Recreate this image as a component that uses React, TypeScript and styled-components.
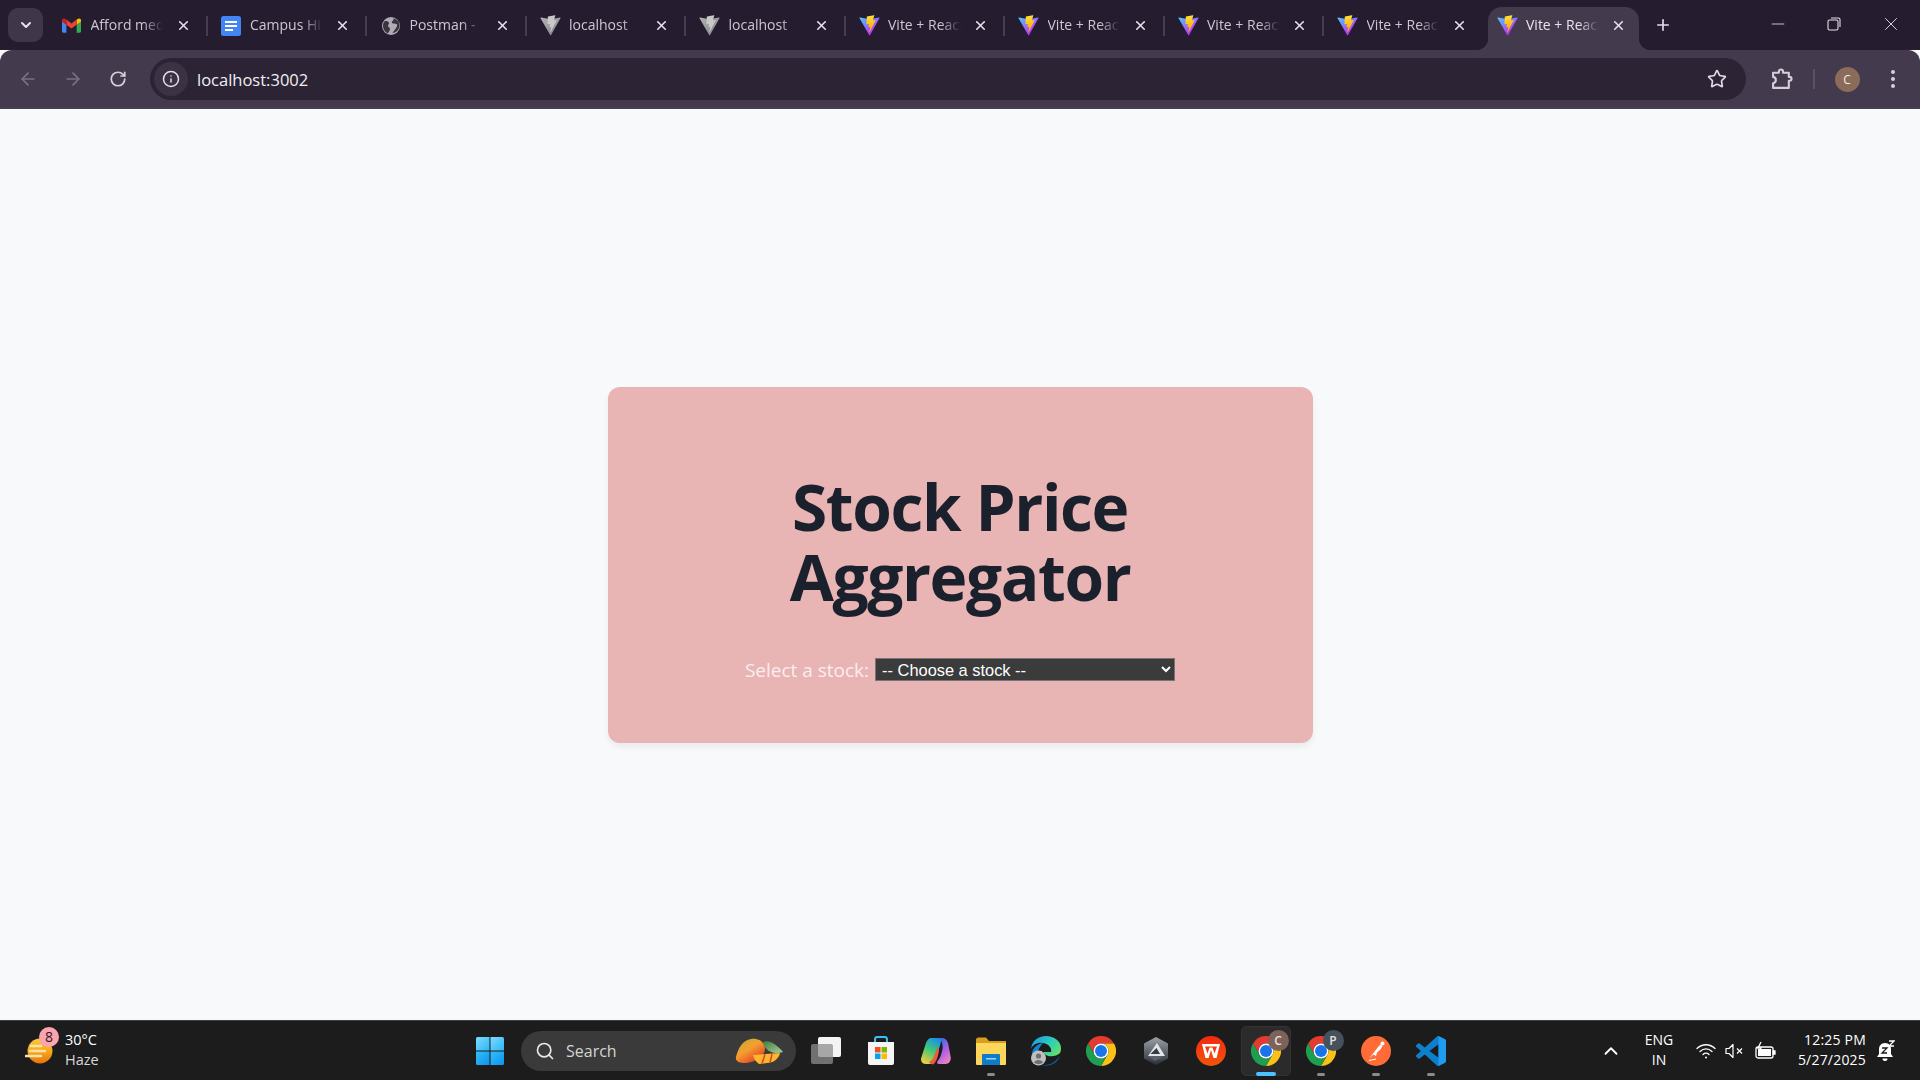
import React from "react";
import styled, { createGlobalStyle } from "styled-components";
import { ArrowLeft, ArrowRight, RotateCw, Info, Star, ChevronDown, ChevronUp, Plus, X, Minus, Search as SearchIcon } from "lucide-react";

const Global = createGlobalStyle`
  html, body { margin: 0; padding: 0; height: 100%; overflow: hidden; }
  #root { height: 100%; }
`;

const uiFont = `"Open Sans", "Noto Sans", sans-serif`;

const Screen = styled.div`
  width: 1920px; height: 1080px; display: flex; flex-direction: column;
  font-family: ${uiFont}; background: #f7f9fa;
`;

/* ---------- tab strip ---------- */
const TabStrip = styled.div`
  height: 50px; flex: none; background: #251d2f; display: flex; align-items: flex-end; padding-left: 8px;
`;
const TabSearch = styled.div`
  width: 35px; height: 34px; margin: 0 3px 8px 0; border-radius: 10px; background: #3f3749; color: #e6e0ea;
  display: flex; align-items: center; justify-content: center; flex: none;
`;
const Tab = styled.div`
  width: 159.5px; height: 43px; flex: none; position: relative; padding-left: 6.5px; box-sizing: border-box;
  &::after {
    content: ""; position: absolute; right: -2px; top: 9px; width: 2px; height: 20px;
    background: ${p => (p.$hideLine ? "transparent" : "#463e50")};
  }
`;
const TabBody = styled.div`
  width: 150.5px; height: 43px; box-sizing: border-box; padding: 0 10px 6px 8px; display: flex; align-items: center; position: relative;
  border-radius: 14px 14px 0 0; background: ${p => (p.$active ? "#433a4d" : "transparent")};
  color: ${p => (p.$active ? "#e9e4ec" : "#cdc7d2")};
  ${p => p.$active && `
    &::before, &::after { content: ""; position: absolute; bottom: 0; width: 12px; height: 12px; }
    &::before { left: -12px; background: radial-gradient(circle at 0 0, #251d2f 12px, #433a4d 12.5px); }
    &::after { right: -12px; background: radial-gradient(circle at 100% 0, #251d2f 12px, #433a4d 12.5px); }
  `}
`;
const Favicon = styled.span`
  width: 22px; height: 22px; flex: none; display: flex; align-items: center; justify-content: center;
`;
const TabTitle = styled.span`
  flex: 1; min-width: 0; margin: -2px 0 0 8px; font-size: 14px; white-space: nowrap; overflow: hidden;
  -webkit-mask-image: linear-gradient(90deg, #000 72%, transparent 100%);
  mask-image: linear-gradient(90deg, #000 72%, transparent 100%);
`;
const TabClose = styled.span`
  width: 20px; height: 20px; flex: none; margin-left: 10px; display: flex; align-items: center; justify-content: center; color: #e6e0ea;
`;
const NewTab = styled.div`
  width: 24px; height: 24px; margin: 0 0 13px 10px; color: #e3dde7; display: flex; align-items: center; justify-content: center; flex: none;
`;
const WindowControls = styled.div`
  margin-left: auto; display: flex; height: 50px; align-items: center; padding-right: 1px; padding-bottom: 2px; box-sizing: border-box; color: #e6e0ea;
`;
const WinButton = styled.div`
  width: 56.5px; height: 24px; display: flex; align-items: center; justify-content: center;
`;

/* ---------- toolbar ---------- */
const Toolbar = styled.div`
  height: 59px; flex: none; box-sizing: border-box; background: #433a4d; border-radius: 12px 12px 0 0;
  border-bottom: 2px solid #483f52; display: flex; align-items: center; padding: 1px 12px 0 11px; color: #d6d0da;
`;
const NavButton = styled.div`
  width: 34px; height: 34px; margin-right: 11px; display: flex; align-items: center; justify-content: center; flex: none;
  color: ${p => (p.$dim ? "#7a7283" : "#d6d0da")};
`;
const Omnibox = styled.div`
  width: 1596px; height: 42px; margin-left: 4px; flex: none; border-radius: 21px; background: #2c2434; display: flex; align-items: center; padding: 0 19px 0 4px; box-sizing: border-box;
`;
const InfoChip = styled.div`
  width: 34px; height: 34px; border-radius: 50%; background: #3b3344; color: #e6e0ea; display: flex; align-items: center; justify-content: center; flex: none;
`;
const Url = styled.span`
  margin-left: 9px; font-size: 16.5px; color: #f1eef3; flex: 1;
`;
const ToolIcon = styled.div`
  width: 28px; height: 28px; display: flex; align-items: center; justify-content: center; flex: none; margin-left: ${p => p.$ml || 0}px;
`;
const ToolDivider = styled.div`
  width: 2px; height: 20px; background: #5a5164; margin-left: 17px; flex: none;
`;
const Avatar = styled.div`
  width: 25px; height: 25px; border-radius: 50%; background: #8b6b5a; color: #f4ece8; font-size: 12px; display: flex; align-items: center; justify-content: center; margin-left: 19.5px; flex: none;
`;
const Dots = styled.div`
  display: flex; flex-direction: column; gap: 3px; margin-left: 31.5px; flex: none;
  span { width: 4px; height: 4px; border-radius: 50%; background: #d6d0da; display: block; }
`;

/* ---------- page ---------- */
const Page = styled.main`
  flex: 1; display: flex; align-items: center; justify-content: center; background: #f7f9fa;
`;
const Card = styled.section`
  width: 705px; height: 356px; box-sizing: border-box; border-radius: 12px; background: #e8b4b4; box-shadow: 0 4px 6px rgba(0,0,0,0.06);
  display: flex; flex-direction: column; align-items: center; padding-top: 85.5px;
`;
const Title = styled.h1`
  margin: 0; width: 400px; text-align: center; font-size: 64px; line-height: 70px; font-weight: 700; color: #1a202c;
  font-family: "Open Sans", sans-serif; letter-spacing: -1.4px;
`;
const FormRow = styled.div`
  display: flex; align-items: center; margin-top: 45.5px; gap: 6px;
`;
const Label = styled.label`
  font-size: 19px; color: #fbeeee; line-height: 24px;
`;
const Select = styled.select`
  width: 300px; height: 23px; box-sizing: border-box; color-scheme: dark; font-family: "Liberation Sans", Arial, sans-serif; font-size: 16.4px;
  background: #3b3b3b; color: #fff; border: 1px solid #767676; border-radius: 0; padding: 0 0 0 2px;
`;

/* ---------- taskbar ---------- */
const Taskbar = styled.footer`
  height: 60px; flex: none; box-sizing: border-box; background: #1c1c1c; border-top: 1px solid #3d3d3d; display: flex; align-items: center; color: #fff;
`;
const Weather = styled.div`
  width: 475px; flex: none; display: flex; align-items: center; padding-left: 25px; box-sizing: border-box; position: relative;
`;
const WeatherBadge = styled.span`
  position: absolute; left: 39px; top: -3px; width: 20px; height: 20px; border-radius: 50%; background: #fba3b1; color: #2a1a1c; font-size: 14px; display: flex; align-items: center; justify-content: center; line-height: 1;
`;
const WeatherText = styled.div`
  margin-left: 12px; padding-bottom: 2px; font-size: 14.5px; line-height: 20px; display: flex; flex-direction: column;
  span:last-child { color: #d8d8d8; }
`;
const StartButton = styled.div`
  width: 30px; height: 30px; flex: none; margin-right: 16px;
`;
const SearchPill = styled.div`
  width: 275px; height: 40px; flex: none; box-sizing: border-box; border-radius: 20px; background: #3a3a3a; display: flex; align-items: center; padding: 0 13px 0 14px; color: #e8e8e8;
`;
const SearchLabel = styled.span`
  font-size: 16px; margin-left: 11px; flex: 1; color: #d4d4d4;
`;
const AppRow = styled.div`
  display: flex; margin-left: 2.5px; align-items: center; height: 60px;
`;
const AppSlot = styled.div`
  width: 55px; height: 50px; display: flex; align-items: center; justify-content: center; position: relative; flex: none;
  ${p => p.$active && `
    &::before { content: ""; position: absolute; left: 2.5px; top: 0; width: 50px; height: 50px; border-radius: 5px; background: #2b2b2b; border: 1px solid #333; box-sizing: border-box; }
  `}
  svg { position: relative; }
  &::after {
    content: ""; position: absolute; bottom: 0; left: 50%; transform: translateX(-50%); border-radius: 2px; 
    display: ${p => (p.$dot || p.$active ? "block" : "none")};
    width: ${p => (p.$active ? 20 : 8)}px; height: ${p => (p.$active ? 4 : 3)}px; background: ${p => (p.$active ? "#4cc2ff" : "#8c8c8c")};
  }
`;
const ProfileBadge = styled.span`
  position: absolute; right: 5px; top: 4px; width: 21px; height: 21px; border-radius: 50%; background: ${p => p.$bg}; color: #e8e0dc; font-size: 12px; display: flex; align-items: center; justify-content: center; font-weight: 600;
`;
const Tray = styled.div`
  margin-left: auto; display: flex; align-items: center; height: 60px; padding-right: 25px; font-size: 14px; position: relative;
`;
const LangBlock = styled.div`
  width: 40px; margin-left: 17px; padding-bottom: 2px; text-align: center; font-size: 14px; line-height: 20px; display: flex; flex-direction: column;
`;
const TrayIcon = styled.div`
  display: flex; align-items: center; justify-content: center; flex: none; margin-left: ${p => p.$ml}px;
`;
const Clock = styled.div`
  width: 62px; margin-left: 27px; padding-bottom: 2px; text-align: right; font-size: 14px; line-height: 20px; display: flex; flex-direction: column; white-space: nowrap; align-items: flex-end; letter-spacing: 0.2px;
`;

/* ---------- drawings ---------- */
const ViteShape = ({ grey }: { grey?: boolean }) => (
  <svg width="21" height="21" viewBox="0 0 410 404" fill="none">
    <defs>
      <linearGradient id="vA" x1="6" y1="33" x2="235" y2="344" gradientUnits="userSpaceOnUse"><stop stopColor="#41D1FF" /><stop offset="1" stopColor="#BD34FE" /></linearGradient>
      <linearGradient id="vB" x1="194.65" y1="8.8" x2="236.08" y2="292.99" gradientUnits="userSpaceOnUse"><stop stopColor="#FFEA83" /><stop offset="0.083" stopColor="#FFDD35" /><stop offset="1" stopColor="#FFA800" /></linearGradient>
      <linearGradient id="gA" x1="6" y1="33" x2="235" y2="344" gradientUnits="userSpaceOnUse"><stop stopColor="#b5b5b5" /><stop offset="1" stopColor="#8e8e8e" /></linearGradient>
    </defs>
    <path d="M399.641 59.5246L215.643 388.545C211.844 395.338 202.084 395.378 198.228 388.618L10.5817 59.5563C6.38087 52.1896 12.6802 43.2665 21.0281 44.7586L205.223 77.6824C206.398 77.8924 207.601 77.8904 208.776 77.6763L389.119 44.8058C397.439 43.2894 403.768 52.1434 399.641 59.5246Z" fill={grey ? "url(#gA)" : "url(#vA)"} />
    <path d="M292.965 1.5744L156.801 28.2552C154.563 28.6937 152.906 30.5903 152.771 32.8664L144.395 174.33C144.198 177.662 147.258 180.248 150.51 179.498L188.42 170.749C191.967 169.931 195.172 173.055 194.443 176.622L183.18 231.775C182.422 235.487 185.907 238.661 189.532 237.56L212.947 230.446C216.577 229.344 220.065 232.527 219.297 236.242L201.398 322.875C200.278 328.294 207.486 331.249 210.492 326.603L212.5 323.5L323.454 102.072C325.312 98.3645 322.108 94.137 318.036 94.9228L279.014 102.454C275.347 103.161 272.227 99.746 273.262 96.1583L298.731 7.86689C299.767 4.27314 296.636 0.855181 292.965 1.5744Z" fill={grey ? "#c9c9c9" : "url(#vB)"} />
  </svg>
);
const GmailIcon = () => (
  <svg width="19" height="15" viewBox="0 0 24 18">
    <path d="M0 3v13.5C0 17.3.7 18 1.5 18H5.5V8z" fill="#4285f4" />
    <path d="M24 3v13.5c0 .8-.7 1.5-1.5 1.5h-4V8z" fill="#34a853" />
    <path d="M18.5 1.5V8L24 4V2.2C24 .4 22-.6 20.6.4z" fill="#fbbc04" />
    <path d="M5.5 8V1.5L12 6.4l6.5-4.9V8L12 12.9z" fill="#ea4335" />
    <path d="M0 2.2V4l5.5 4V1.5L3.4.4C2-.6 0 .4 0 2.2z" fill="#c5221f" />
  </svg>
);
const DocsIcon = () => (
  <svg width="20" height="20" viewBox="0 0 20 20">
    <rect width="20" height="20" rx="2.5" fill="#4285f4" />
    <rect x="4" y="5" width="12" height="2" fill="#fff" /><rect x="4" y="9" width="12" height="2" fill="#fff" /><rect x="4" y="13" width="8" height="2" fill="#fff" />
  </svg>
);
const GlobeIcon = () => (
  <svg width="18" height="18" viewBox="0 0 18 18">
    <circle cx="9" cy="9" r="9" fill="#b0abb5" />
    <path d="M3 4c2 0 4 .5 4 2s-1 1.5-1 3 2 1 2 3-1.5 3-2.5 4.500C3 15 1 12 1 9s1-4 2-5zM11 1.500c1 1 .5 2-.5 2.500s-1 2 .5 2.500 3.500 0 4 1 -.5 3-2 5-1.500 2-2.500 3.500c4-.5 7-3.500 7-7.500s-2.500-6.500-6.500-7z" fill="#3a3340" />
  </svg>
);
const PuzzleIcon = () => (
  <svg width="22" height="22" viewBox="0 0 21 21" fill="none" stroke="#d6cfdb" strokeWidth="2" strokeLinejoin="round">
    <path d="M2 4.500H7.500V3.500a2 2 0 0 1 4 0V4.500H17V8.500H17.800a1.800 1.800 0 0 1 0 3.600H17V19H2V14.500C5.500 14 5.500 9 2 8.500Z" />
  </svg>
);
const WindowsLogo = () => (
  <svg width="30" height="30" viewBox="0 0 30 30">
    <defs>
      <linearGradient id="wA" x1="0" y1="0" x2="1" y2="1"><stop stopColor="#7fdcff" /><stop offset="1" stopColor="#2bb5f7" /></linearGradient>
      <linearGradient id="wB" x1="0" y1="0" x2="1" y2="1"><stop stopColor="#36bdf8" /><stop offset="1" stopColor="#0a94ee" /></linearGradient>
    </defs>
    <path d="M1 2.500Q1 1 2.500 1H14.500V14.500H1z" fill="url(#wA)" /><path d="M15.500 1H27.500Q29 1 29 2.500V14.500H15.500z" fill="url(#wA)" />
    <path d="M1 15.500H14.500V29H2.500Q1 29 1 27.500z" fill="url(#wB)" /><path d="M15.500 15.500H29V27.500Q29 29 27.500 29H15.500z" fill="url(#wB)" />
  </svg>
);
const WeatherIcon = () => (
  <svg width="28" height="26" viewBox="0 0 28 26">
    <defs><linearGradient id="sun" x1="0" y1="0" x2="0" y2="1"><stop stopColor="#fbc93a" /><stop offset="0.55" stopColor="#f6a41c" /><stop offset="1" stopColor="#e5720a" /></linearGradient></defs>
    <circle cx="15" cy="13" r="12.500" fill="url(#sun)" />
    <path d="M6 8h10M5 13h15M1 18h15" stroke="#fde2a8" strokeWidth="2.600" strokeLinecap="round" />
  </svg>
);
const MangoIcon = () => (
  <svg width="48" height="26" viewBox="0 0 48 26">
    <defs>
      <linearGradient id="mA" x1="0.1" y1="0.1" x2="0.8" y2="1"><stop stopColor="#c9a83a" /><stop offset="0.4" stopColor="#f3a02f" /><stop offset="1" stopColor="#e2322a" /></linearGradient>
      <linearGradient id="mB" x1="0" y1="0" x2="1" y2="1"><stop stopColor="#3f7d3a" /><stop offset="1" stopColor="#a9cfa0" /></linearGradient>
    </defs>
    <path d="M28 4C35 1 44 9 48 14 40 17 30 14 28 4z" fill="url(#mB)" />
    <path d="M16 1C25 0 30 5 30 11 30 17 22 24 11 25 4 25 0 23 1 19 3 10 8 2 16 1z" fill="url(#mA)" />
    <path d="M18 17L45 15C44 21 38 25 32 25L24 26C21 24 19 21 18 17z" fill="#ffb52e" />
    <path d="M30 16.500L27 25.500M37 16L35 24.500" stroke="#d9451f" strokeWidth="1.500" />
  </svg>
);
const TaskViewIcon = () => (
  <svg width="30" height="27" viewBox="0 0 30 27">
    <rect x="7" y="0" width="23" height="20" rx="2" fill="#f4f4f4" />
    <rect x="0" y="7" width="22" height="20" rx="2" fill="#8e8e8e" fillOpacity="0.75" />
  </svg>
);
const StoreIcon = () => (
  <svg width="30" height="30" viewBox="0 0 30 30">
    <path d="M9 6V3.500C9 2 10 1 11 1h8c1 0 2 1 2 2.500V6" stroke="#36c0f4" strokeWidth="2" fill="none" />
    <path d="M2 6h26v21a2 2 0 0 1-2 2H4a2 2 0 0 1-2-2z" fill="#f5f5f5" />
    <rect x="9" y="11" width="5.500" height="5.500" fill="#f25022" /><rect x="15.500" y="11" width="5.500" height="5.500" fill="#7fba00" />
    <rect x="9" y="17.500" width="5.500" height="5.500" fill="#00a4ef" /><rect x="15.500" y="17.500" width="5.500" height="5.500" fill="#ffb900" />
  </svg>
);
const CopilotIcon = () => (
  <svg width="30" height="28" viewBox="0 0 30 28">
    <defs>
      <linearGradient id="cA" x1="0.7" y1="0" x2="0.2" y2="1"><stop stopColor="#1f8fe6" /><stop offset="0.45" stopColor="#3cc97a" /><stop offset="1" stopColor="#f6cf3a" /></linearGradient>
      <linearGradient id="cB" x1="0.3" y1="0" x2="0.8" y2="1"><stop stopColor="#2f6fe6" /><stop offset="0.5" stopColor="#b15ee6" /><stop offset="1" stopColor="#f28ab8" /></linearGradient>
    </defs>
    <path d="M10 1h8c2 0 3 2 2 4L15 22c-1 3-3 5-6 5H5C1 27-1 24 .5 20L5 6C6 3 8 1 10 1z" fill="url(#cA)" />
    <path d="M16 1h5c3 0 5 2 6 5l2.500 13c1 4-1 8-5 8h-6c-2 0-3-1-2-3 3-3 4-7 5-12 .5-4 -.5-11-5.500-11z" fill="url(#cB)" />
    <path d="M11 27c-2 0-3-1-2.500-2.500 3-1 4-4 5-7l3-7c1 0 1.500 1 1.500 2.500-.5 5-2 10-4 12.500-1 1.500-2 2-3 2z" fill="#ef5a3c" />
  </svg>
);
const FilesIcon = () => (
  <svg width="30" height="28" viewBox="0 0 30 28">
    <path d="M0 3C0 1.500 1 .500 2.500 .500H10l3 3.500h17v23H0z" fill="#d99e1e" />
    <path d="M0 6h30v21a1 1 0 0 1-1 1H1a1 1 0 0 1-1-1z" fill="#fdd75c" />
    <path d="M6 18a1 1 0 0 1 1-1h16a1 1 0 0 1 1 1v10H6z" fill="#0f7cc9" /><rect x="10" y="21" width="10" height="1.500" fill="#9fd5f5" />
  </svg>
);
const EdgeIcon = () => (
  <svg width="30" height="30" viewBox="0 0 30 30">
    <defs>
      <linearGradient id="eA" x1="0" y1="0.2" x2="1" y2="0.8"><stop stopColor="#1b9de2" /><stop offset="0.55" stopColor="#2fd0b5" /><stop offset="1" stopColor="#6ae062" /></linearGradient>
    </defs>
    <path d="M15 0C7 0 1 5 0 13c2-5 7-7 12-6 6 1 9 5 8 9h-7c-1 0 0 2 2 3 3 2 10 2 14-2 1-2 1-4 1-5C30 5 23 0 15 0z" fill="url(#eA)" />
    <path d="M12 7C6 8 0 13 1 20c1 4 3 7 6 9-3-5-2-14 5-22z" fill="#1583d6" />
    <path d="M29 19c-3 6-9 10-15 10-2 0-4-.5-5-1 3 2 7 2 10 1 5-1 9-5 10-10z" fill="#0f5fa8" />
    <circle cx="7.500" cy="22" r="7.500" fill="#bfbfbf" /><circle cx="7.500" cy="20" r="2.600" fill="#6f6f6f" /><path d="M3 26.500c1-3.500 8-3.500 9 0a7 7 0 0 1-9 0z" fill="#6f6f6f" />
  </svg>
);
const ChromeIcon = () => (
  <svg width="30" height="30" viewBox="0 0 30 30">
    <path d="M2 7.500A15 15 0 0 1 28 7.500H15A7.500 7.500 0 0 0 8.500 18.750Z" fill="#e33b2e" />
    <path d="M28 7.500A15 15 0 0 1 15 30L21.500 18.750A7.500 7.500 0 0 0 15 7.500Z" fill="#fbc116" />
    <path d="M15 30A15 15 0 0 1 2 7.500L8.500 18.750A7.500 7.500 0 0 0 21.500 18.750Z" fill="#1e9e50" />
    <circle cx="15" cy="15" r="7.500" fill="#fff" /><circle cx="15" cy="15" r="6" fill="#1a73e8" />
  </svg>
);
const HexIcon = () => (
  <svg width="28" height="28" viewBox="0 0 28 28">
    <defs><linearGradient id="hA" x1="0" y1="0" x2="0" y2="1"><stop stopColor="#9aa2aa" /><stop offset="1" stopColor="#2a2f35" /></linearGradient></defs>
    <path d="M14 0l12 6.500v15L14 28 2 21.500v-15z" fill="url(#hA)" />
    <path d="M15 6L23 19H6z" fill="#e1e5e9" /><path d="M14.500 11l3.500 6H8.500z" fill="#333a41" />
    <path d="M6 19l12 0 3 1-8 4z" fill="#59626b" />
  </svg>
);
const WpsIcon = () => (
  <svg width="30" height="30" viewBox="0 0 30 30">
    <defs><linearGradient id="wpsG" x1="0" y1="0" x2="0" y2="1"><stop stopColor="#f5290f" /><stop offset="1" stopColor="#f0560c" /></linearGradient></defs>
    <circle cx="15" cy="15" r="15" fill="url(#wpsG)" />
    <path d="M6 8h18l-3.500 14h-3l-2.500-8-2.500 8h-3z M9 10.500l2.500 7 2-6h3l2 6 2.500-7z" fill="#fff" fillRule="evenodd" />
  </svg>
);
const PostmanIcon = () => (
  <svg width="30" height="30" viewBox="0 0 30 30">
    <circle cx="15" cy="15" r="15" fill="#ff6c37" />
    <path d="M8 22.500l6-7.500 3-4 2.500-2.500 2 1.500-2 3.500-3.500 3-1 3.500-2.500-1.500-3.500 3z" fill="#fff" />
    <circle cx="21.500" cy="7.500" r="2" fill="#fff" />
    <path d="M8 24.500l7-1.500" stroke="#fff" strokeWidth="1.200" />
  </svg>
);
const VSCodeIcon = () => (
  <svg width="30" height="30" viewBox="0 0 100 100">
    <path fillRule="evenodd" d="M70.900 99.300a6.200 6.200 0 0 0 5-.2l20.600-9.900a6.200 6.200 0 0 0 3.500-5.600V16.400a6.200 6.200 0 0 0-3.500-5.600L75.900.9a6.200 6.200 0 0 0-7.100 1.200L29.400 38 12.200 25a4.200 4.200 0 0 0-5.300.2L1.400 30.300a4.200 4.200 0 0 0 0 6.200L16.300 50 1.400 63.500a4.200 4.200 0 0 0 0 6.200l5.500 5a4.200 4.200 0 0 0 5.300.2L29.400 62l39.400 35.900a6.200 6.200 0 0 0 2.100 1.400zM75 27.300L45.100 50 75 72.700z" fill="#0e7fcb" />
    <path d="M75 .3l21.500 10.500a6.200 6.200 0 0 1 3.500 5.600v67.200a6.200 6.200 0 0 1-3.500 5.600L75 99.700z" fill="#1f9cf0" />
  </svg>
);

const tabs = [
  { title: "Afford medical", icon: <GmailIcon /> },
  { title: "Campus Hiring", icon: <DocsIcon /> },
  { title: "Postman - ", icon: <GlobeIcon /> },
  { title: "localhost", icon: <ViteShape grey /> },
  { title: "localhost", icon: <ViteShape grey /> },
  { title: "Vite + React", icon: <ViteShape /> },
  { title: "Vite + React", icon: <ViteShape /> },
  { title: "Vite + React", icon: <ViteShape /> },
  { title: "Vite + React", icon: <ViteShape /> },
  { title: "Vite + React", icon: <ViteShape />, active: true },
];

export default function App() {
  return (
    <Screen>
      <Global />
      <TabStrip>
        <TabSearch><ChevronDown size={16} strokeWidth={3} /></TabSearch>
        {tabs.map((t, i) => (
          <Tab key={i} $hideLine={i >= 8}>
            <TabBody $active={t.active}>
              <Favicon>{t.icon}</Favicon>
              <TabTitle>{t.title}</TabTitle>
              <TabClose><X size={15} strokeWidth={2.6} /></TabClose>
            </TabBody>
          </Tab>
        ))}
        <NewTab><Plus size={18} strokeWidth={2.2} /></NewTab>
        <WindowControls>
          <WinButton><Minus size={20} strokeWidth={1} /></WinButton>
          <WinButton>
            <svg width="14" height="14" viewBox="0 0 14 14" fill="none" stroke="currentColor" strokeWidth="1.100">
              <rect x="1" y="3" width="10" height="10" rx="1.500" /><path d="M4 1h7.500A1.500 1.500 0 0 1 13 2.500V10" />
            </svg>
          </WinButton>
          <WinButton><X size={22} strokeWidth={1} /></WinButton>
        </WindowControls>
      </TabStrip>
      <Toolbar>
        <NavButton $dim><ArrowLeft size={20} /></NavButton>
        <NavButton $dim><ArrowRight size={20} /></NavButton>
        <NavButton><RotateCw size={18} strokeWidth={2.300} /></NavButton>
        <Omnibox>
          <InfoChip><Info size={18} strokeWidth={2} /></InfoChip>
          <Url>localhost:3002</Url>
          <Star size={20} strokeWidth={2} color="#e0dae4" />
        </Omnibox>
        <ToolIcon $ml={22}><PuzzleIcon /></ToolIcon>
        <ToolDivider />
        <Avatar>C</Avatar>
        <Dots><span /><span /><span /></Dots>
      </Toolbar>
      <Page>
        <Card>
          <Title>Stock Price Aggregator</Title>
          <FormRow>
            <Label htmlFor="stock">Select a stock:</Label>
            <Select id="stock" defaultValue="">
              <option value="">-- Choose a stock --</option>
            </Select>
          </FormRow>
        </Card>
      </Page>
      <Taskbar>
        <Weather>
          <WeatherIcon />
          <WeatherBadge>8</WeatherBadge>
          <WeatherText><span>30°C</span><span>Haze</span></WeatherText>
        </Weather>
        <StartButton><WindowsLogo /></StartButton>
        <SearchPill>
          <SearchIcon size={20} strokeWidth={2} />
          <SearchLabel>Search</SearchLabel>
          <MangoIcon />
        </SearchPill>
        <AppRow>
          <AppSlot><TaskViewIcon /></AppSlot>
          <AppSlot><StoreIcon /></AppSlot>
          <AppSlot><CopilotIcon /></AppSlot>
          <AppSlot $dot><FilesIcon /></AppSlot>
          <AppSlot><EdgeIcon /></AppSlot>
          <AppSlot><ChromeIcon /></AppSlot>
          <AppSlot><HexIcon /></AppSlot>
          <AppSlot><WpsIcon /></AppSlot>
          <AppSlot $active><ChromeIcon /><ProfileBadge $bg="#7c6259">C</ProfileBadge></AppSlot>
          <AppSlot $dot><ChromeIcon /><ProfileBadge $bg="#44525e">P</ProfileBadge></AppSlot>
          <AppSlot $dot><PostmanIcon /></AppSlot>
          <AppSlot $dot><VSCodeIcon /></AppSlot>
        </AppRow>
        <Tray>
          <ChevronUp size={22} strokeWidth={2} />
          <LangBlock><span>ENG</span><span>IN</span></LangBlock>
          <TrayIcon $ml={17}>
            <svg width="20" height="20" viewBox="0 0 20 20" fill="none" stroke="#fff" strokeWidth="1.300" strokeLinecap="round">
              <path d="M1 7.500c5-5 13-5 18 0M4 10.500c3.500-3.500 8.500-3.500 12 0M7 13.500c1.700-1.700 4.300-1.700 6 0" /><circle cx="10" cy="16.500" r="1" fill="#fff" stroke="none" />
            </svg>
          </TrayIcon>
          <TrayIcon $ml={9}>
            <svg width="20" height="20" viewBox="0 0 20 20" fill="none" stroke="#fff" strokeWidth="1.200" strokeLinejoin="round">
              <path d="M1 7.500h3l4-4v13l-4-4H1z" /><path d="M12 7.500l5 5M17 7.500l-5 5" />
            </svg>
          </TrayIcon>
          <TrayIcon $ml={10}>
            <svg width="22" height="20" viewBox="0 0 22 20" fill="none" stroke="#fff" strokeWidth="1.300">
              <rect x="1" y="6" width="17" height="11" rx="2" /><rect x="3" y="8" width="13" height="7" fill="#fff" stroke="none" /><path d="M18 10h2v3h-2z" fill="#fff" />
              <path d="M6 1L3 7h3l-2 5" stroke="#fff" />
            </svg>
          </TrayIcon>
          <Clock><span>12:25 PM</span><span>5/27/2025</span></Clock>
          <TrayIcon $ml={9}>
            <svg width="20" height="22" viewBox="0 0 20 22">
              <path d="M10 3c-4 0-6 3-6 6v5l-2 3h16l-2-3V9c0-3-2-6-6-6z" fill="#fff" /><path d="M7.500 18.500h5a2.500 2.500 0 0 1-5 0z" fill="#fff" />
              <path d="M7 8h5l-5 5h5" stroke="#1c1c1c" strokeWidth="1.300" fill="none" /><path d="M14 1h5l-5 5h5" stroke="#fff" strokeWidth="1.300" fill="none" />
            </svg>
          </TrayIcon>
        </Tray>
      </Taskbar>
    </Screen>
  );
}
